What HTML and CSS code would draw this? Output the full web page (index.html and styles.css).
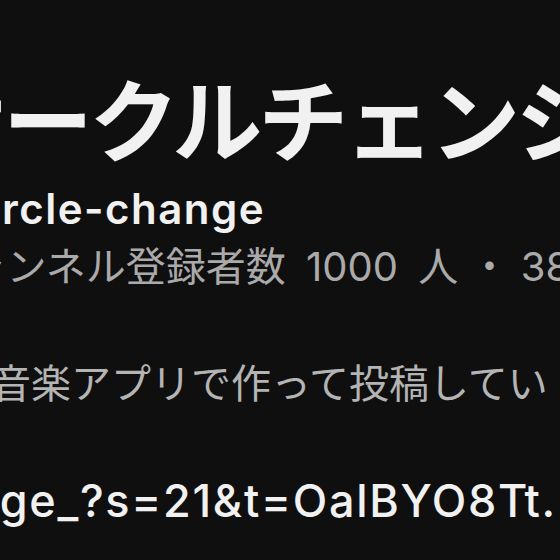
FILE: index.html
```html
<!DOCTYPE html>
<html lang="ja">
<head>
  <meta charset="utf-8">
  <title>サークルチェンジ</title>
  <link rel="stylesheet" href="styles.css">
</head>
<body>

<header class="channel">
  <h1 class="channel-name">サークルチェンジ</h1>
  <div class="channel-handle">@circle-change</div>
  <div class="channel-meta"><span class="meta-subs">チャンネル登録者数 1000 人</span> ・ 38 本の動画</div>
  <p class="channel-desc">音楽アプリで作って投稿しています。</p>
  <a class="channel-link" href="#">@circle-change_?s=21&amp;t=OalBYO8Tt.</a>
</header>

</body>
</html>
```

FILE: styles.css
```css
html, body {
  margin: 0;
  overflow: hidden;
  background: #0f0f0f;
}

body {
  font-family: Inter, "Noto Sans CJK JP", sans-serif;
  color: #f1f1f1;
}

.channel {
  padding-top: 66px;
  white-space: nowrap;
}

.channel-name {
  margin: 0;
  font-family: "Noto Sans CJK JP", sans-serif;
  font-size: 90px;
  font-weight: 700;
  line-height: 100px;
  letter-spacing: -4px;
  text-indent: -83px;
}

.channel-handle {
  margin-top: 18px;
  font-size: 42px;
  font-weight: 600;
  line-height: 50px;
  letter-spacing: 1.5px;
  text-indent: -80px;
}

.channel-meta {
  margin-top: 10px;
  font-size: 40px;
  font-weight: 400;
  line-height: 46px;
  color: #aaaaaa;
  text-indent: -73px;
}

.meta-subs {
  word-spacing: 9px;
}

.channel-desc {
  margin: 68px 0 0;
  width: 552px;
  overflow: hidden;
  font-family: "Noto Sans CJK JP", sans-serif;
  font-size: 40px;
  font-weight: 400;
  line-height: 46px;
  color: #b4b4b4;
  text-indent: -9px;
}

.channel-link {
  display: block;
  margin-top: 71px;
  font-size: 45px;
  font-weight: 500;
  line-height: 52px;
  letter-spacing: 1.7px;
  color: #f1f1f1;
  text-decoration: none;
  text-indent: -309px;
}
```
